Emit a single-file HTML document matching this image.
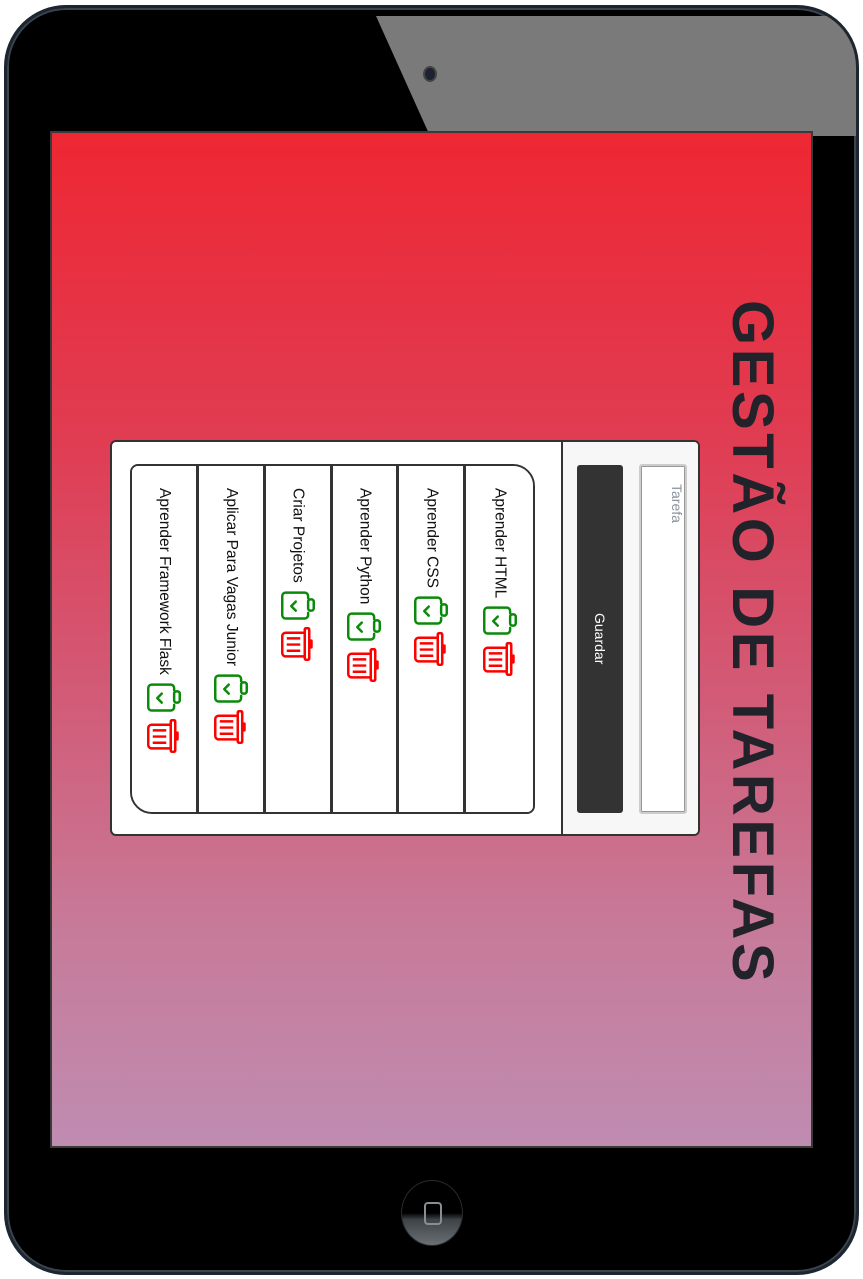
<!DOCTYPE html>
<html><head><meta charset="utf-8"><style>
*{margin:0;padding:0;box-sizing:border-box}
body{width:863px;height:1279px;background:#fff;position:relative;overflow:hidden;font-family:"Liberation Sans","DejaVu Sans",sans-serif}
.dev{position:absolute;left:4px;top:5px;width:855px;height:1270px;border-radius:62px;background:#000;border:3px solid #1d2630;box-shadow:inset 0 0 0 2px #3a4550;overflow:hidden}
.glare{position:absolute;left:-7px;top:-5px}
.screen{position:absolute;left:52px;top:133px;width:759px;height:1013px;background:linear-gradient(#ee2733 0%,#e03c52 30%,#d25a76 55%,#c77a98 78%,#bf8cb2 100%);outline:2px solid #3a3a3a}
.cam{position:absolute;left:423px;top:66px;width:14px;height:16px;border-radius:50%;background:#1c2230;border:2px solid #444}
.home{position:absolute;left:401px;top:1180px;width:62px;height:66px;border-radius:50%;background:linear-gradient(#000 50%,#3c4246 60%,#6a7074 100%);border:1px solid #2a2a2a}
.home i{position:absolute;left:22px;top:21px;width:18px;height:23px;border:2px solid #8a8e92;border-radius:4px}
.title{position:absolute;left:720px;top:300px;width:64px;height:690px;writing-mode:vertical-rl;font-weight:bold;font-size:58px;color:#22232a;letter-spacing:3.6px;line-height:64px;font-family:"Liberation Sans",sans-serif}
.panel{position:absolute;left:110px;top:440px;width:590px;height:396px;background:#fff;border:2px solid #333;border-radius:6px;overflow:hidden}
.side{position:absolute;left:449px;top:0;width:137px;height:392px;background:#f7f7f7;border-left:2px solid #333}
.btn{position:absolute;left:14px;top:23px;width:46px;height:348px;background:#333;border-radius:3px;color:#fff;writing-mode:vertical-rl;font-size:14px;display:flex;align-items:center;justify-content:center}
.inp{position:absolute;left:76px;top:22px;width:48px;height:350px;background:#fff;border:2px solid #ccc;box-shadow:0 0 0 1px #999 inset;border-radius:3px;writing-mode:vertical-rl;color:#8a929c;font-size:14px;padding:18px 0 0 12px}
.list{position:absolute;left:18px;top:22px;width:405px;height:350px;border:2px solid #333;border-radius:8px 22px 8px 22px;overflow:hidden;display:flex}
.col{width:67.5px;height:100%;border-right:3px solid #333;display:flex;flex-direction:column;align-items:center;padding-top:22px;background:#fff}
.col:last-child{border-right:none}
.col span{writing-mode:vertical-rl;font-size:15.5px;color:#111;line-height:18px}
.col svg{display:block;margin-top:5px}
</style></head><body>
<div class="dev"><svg class="glare" width="863" height="140"><polygon points="376,13 870,13 870,133 430,133" fill="#7a7a7a"/></svg></div>
<div class="cam"></div>
<div class="screen"></div>
<div class="home"><i></i></div>
<div class="title">GESTÃO DE TAREFAS</div>
<div class="panel">
 <div class="list">
  <div class="col"><span>Aprender Framework Flask</span>__G__ __T__</div>
  <div class="col"><span>Aplicar Para Vagas Junior</span>__G__ __T__</div>
  <div class="col"><span>Criar Projetos</span>__G__ __T__</div>
  <div class="col"><span>Aprender Python</span>__G__ __T__</div>
  <div class="col"><span>Aprender CSS</span>__G__ __T__</div>
  <div class="col"><span>Aprender HTML</span>__G__ __T__</div>
 </div>
 <div class="side"><div class="btn">Guardar</div><div class="inp">Tarefa</div></div>
</div>
<script>
var G='<svg width="36" height="34" viewBox="0 0 32 30" fill="none" stroke="#0a8a0a" stroke-width="2.2" stroke-linecap="round" stroke-linejoin="round"><path d="M25 9V7a3 3 0 0 0-3-3H5a3 3 0 0 0-3 3v17a3 3 0 0 0 3 3h17a3 3 0 0 0 3-3v-2"/><rect x="25" y="10" width="5" height="10" rx="2"/><polyline points="14,12 10,16 14,20"/></svg>';
var T='<svg width="36" height="34" viewBox="0 0 32 30" fill="none" stroke="#f00" stroke-width="2.2" stroke-linejoin="round"><path d="M22 5H5a3 3 0 0 0-3 3v15a3 3 0 0 0 3 3h17z"/><rect x="22" y="1" width="4" height="28" rx="1"/><path d="M26 12h2v6h-2"/><path d="M6 10h12M6 15.5h12M6 21h12"/></svg>';
document.querySelectorAll('.col').forEach(function(c){c.innerHTML=c.innerHTML.replace('__G__',G).replace('__T__',T)});
</script>
</body></html>
